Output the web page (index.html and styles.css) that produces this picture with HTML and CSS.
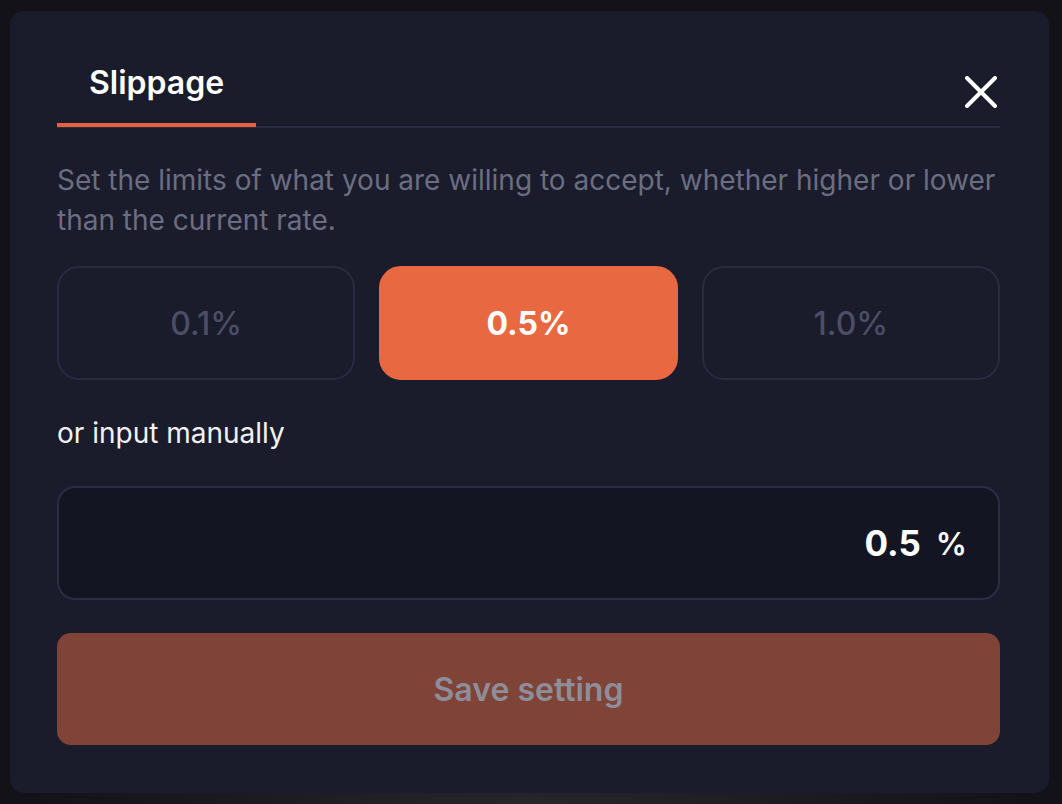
FILE: index.html
```html
<!DOCTYPE html>
<html lang="en">
<head>
<meta charset="utf-8">
<title>Slippage</title>
<link rel="stylesheet" href="styles.css">
</head>
<body>
<div class="backdrop">
  <section class="panel">
    <header class="panel-head">
      <div class="tab">Slippage</div>
      <button class="close" aria-label="Close">
        <svg width="32" height="32" viewBox="0 0 32 32"><path d="M2 2 L30 30 M30 2 L2 30" stroke="#ffffff" stroke-width="4" stroke-linecap="round" fill="none"/></svg>
      </button>
    </header>
    <p class="desc">Set the limits of what you are willing to accept, whether higher or lower than the current rate.</p>
    <div class="options">
      <button class="opt">0.1%</button>
      <button class="opt active">0.5%</button>
      <button class="opt">1.0%</button>
    </div>
    <div class="label">or input manually</div>
    <div class="field">
      <span class="value">0.5</span>
      <span class="unit">%</span>
    </div>
    <button class="save">Save setting</button>
  </section>
</div>
</body>
</html>
```
FILE: styles.css
```css
* { box-sizing: border-box; }
html, body { margin: 0; padding: 0; }
body {
  width: 1062px;
  height: 804px;
  background: #121218;
  font-family: "Inter", "Noto Sans", sans-serif;
  overflow: hidden;
}
.backdrop {
  height: 804px;
  padding: 11px 13px 11px 10px;
  background: radial-gradient(ellipse 500px 60px at 50% 100%, #26262b 0%, #121218 100%);
}
.panel {
  height: 782px;
  background: #1a1b2b;
  border-radius: 14px;
  padding: 50px 49px 0 47px;
  display: flex;
  flex-direction: column;
}
.panel-head {
  display: flex;
  justify-content: space-between;
  align-items: flex-end;
  border-bottom: 2px solid #2a2c40;
  height: 67px;
  flex-shrink: 0;
}
.tab {
  color: #ffffff;
  font-size: 32px;
  font-weight: 600;
  line-height: 40px;
  width: 199px;
  text-align: center;
  padding-bottom: 20px;
  border-bottom: 4px solid #e8603f;
  margin-bottom: -1px;
}
.close {
  background: none;
  border: 0;
  padding: 0;
  margin: 0 3px 18px 0;
  width: 32px;
  height: 32px;
  display: flex;
}
.desc {
  margin: 32px 0 0;
  color: #6b6e82;
  font-size: 28px;
  line-height: 40px;
}
.options {
  margin-top: 26px;
  display: grid;
  grid-template-columns: 1fr 1fr 1fr;
  gap: 24px;
  flex-shrink: 0;
}
.opt {
  height: 114px;
  border: 2px solid #282b42;
  border-radius: 22px;
  background: transparent;
  color: #4b4e64;
  font-family: inherit;
  font-size: 32px;
  font-weight: 500;
}
.opt.active {
  background: #e86842;
  border-color: #e86842;
  color: #ffffff;
  font-weight: 700;
}
.label {
  margin-top: 33px;
  color: #f2f2f5;
  font-size: 28px;
  line-height: 40px;
}
.field {
  margin-top: 33px;
  height: 114px;
  flex-shrink: 0;
  background: #141523;
  border: 2px solid #2a2d43;
  border-radius: 18px;
  display: flex;
  justify-content: flex-end;
  align-items: center;
  gap: 15px;
  padding-right: 31px;
  color: #ffffff;
}
.value {
  font-size: 35px;
  font-weight: 700;
}
.unit {
  font-size: 31px;
  font-weight: 600;
}
.save {
  margin-top: 33px;
  height: 112px;
  flex-shrink: 0;
  border: 0;
  border-radius: 14px;
  background: #7f4338;
  color: #8e8e9a;
  font-family: inherit;
  font-size: 32px;
  font-weight: 600;
}
```
